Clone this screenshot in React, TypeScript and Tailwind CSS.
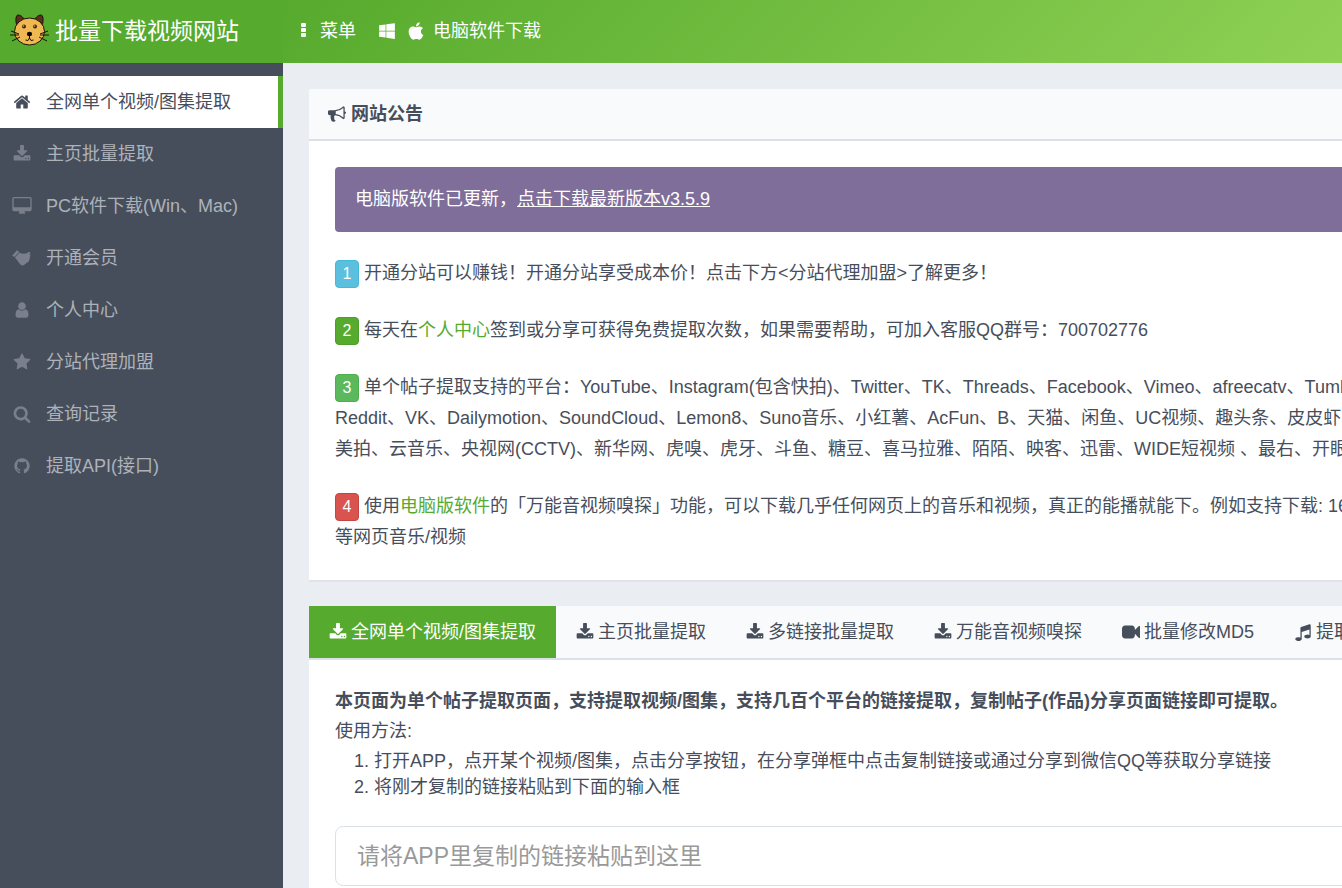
import type { ReactNode } from 'react'
import clsx from 'clsx'
import { FaApple, FaWindows } from 'react-icons/fa'

const icons = {
  home: 'M1472 992v480q0 26-19 45t-45 19h-384v-384h-256v384h-384q-26 0-45-19t-19-45v-480q0-1 .5-3t.5-3l575-474 575 474q1 2 1 6zm223-69l-62 74q-8 9-21 11h-3q-13 0-21-7l-692-577-692 577q-12 8-24 7-13-2-21-11l-62-74q-8-10-7-23.5t11-21.5l719-599q32-26 76-26t76 26l244 204v-195q0-14 9-23t23-9h192q14 0 23 9t9 23v408l219 182q10 8 11 21.5t-7 23.5z',
  download: 'M1344 1344q0-26-19-45t-45-19-45 19-19 45 19 45 45 19 45-19 19-45zm256 0q0-26-19-45t-45-19-45 19-19 45 19 45 45 19 45-19 19-45zm128-224v320q0 40-28 68t-68 28h-1472q-40 0-68-28t-28-68v-320q0-40 28-68t68-28h465l135 136q58 56 136 56t136-56l136-136h464q40 0 68 28t28 68zm-325-569q17 41-14 70l-448 448q-18 19-45 19t-45-19l-448-448q-31-29-14-70 17-39 59-39h256v-448q0-26 19-45t45-19h256q26 0 45 19t19 45v448h256q42 0 59 39z',
  desktop: 'M1728 992v-832q0-13-9.5-22.5t-22.5-9.5h-1600q-13 0-22.5 9.5t-9.5 22.5v832q0 13 9.5 22.5t22.5 9.5h1600q13 0 22.5-9.5t9.5-22.5zm128-832v1088q0 66-47 113t-113 47h-544q0 37 16 77.5t32 71 16 43.5q0 26-19 45t-45 19h-512q-26 0-45-19t-19-45q0-14 16-44t32-70 16-78h-544q-66 0-113-47t-47-113v-1088q0-66 47-113t113-47h1600q66 0 113 47t47 113z',
  hand: 'M-40 620L380 160Q430 120 480 170L600 300L150 790Q110 780 80 750L-50 700Q-70 660-40 620zM200 840L650 340Q800 470 960 480L1330 440L1560 290Q1700 270 1740 400Q1740 470 1620 560L1740 620Q1770 690 1700 740L1650 800L1690 860Q1720 960 1620 1010L1600 1200Q1560 1280 1480 1290L1280 1450Q1080 1660 940 1640Q760 1600 640 1440L440 1140Q300 980 200 840z',
  user: 'M1536 1399q0 109-62.5 187t-150.5 78h-854q-88 0-150.5-78t-62.5-187q0-85 8.5-160.5t31.5-152 58.5-131 94-89 134.5-34.5q131 128 313 128t313-128q76 0 134.5 34.5t94 89 58.5 131 31.5 152 8.5 160.5zm-256-887q0 159-112.5 271.5t-271.5 112.5-271.5-112.5-112.5-271.5 112.5-271.5 271.5-112.5 271.5 112.5 112.5 271.5z',
  star: 'M1728 647q0 22-26 48l-363 354 86 500q1 7 1 20 0 21-10.5 35.5t-30.5 14.5q-19 0-40-12l-449-236-449 236q-22 12-40 12-21 0-31.5-14.5t-10.5-35.5q0-6 2-20l86-500-364-354q-25-27-25-48 0-37 56-46l502-73 225-455q19-41 49-41t49 41l225 455 502 73q56 9 56 46z',
  search: 'M1216 832q0-185-131.5-316.5t-316.5-131.5-316.5 131.5-131.5 316.5 131.5 316.5 316.5 131.5 316.5-131.5 131.5-316.5zm512 832q0 52-38 90t-90 38q-54 0-90-38l-343-342q-179 124-399 124-143 0-273.5-55.5t-225-150-150-225-55.5-273.5 55.5-273.5 150-225 225-150 273.5-55.5 273.5 55.5 225 150 150 225 55.5 273.5q0 220-124 399l343 343q37 37 37 90z',
  github: 'M896 128q209 0 385.5 103t279.5 279.5 103 385.5q0 251-146.5 451.5t-378.5 277.5q-27 5-40-7t-13-30q0-3 .5-76.5t.5-134.5q0-97-52-142 57-6 102.5-18t94-39 81-66.5 53-105 20.5-150.5q0-119-79-206 37-91-8-204-28-9-81 11t-92 44l-38 24q-93-26-192-26t-192 26q-16-11-42.5-27t-83.5-38.5-85-13.5q-45 113-8 204-79 87-79 206 0 85 20.5 150t52.5 105 80.5 67 94 39 102.5 18q-39 36-49 103-21 10-45 15t-57 5-65.5-21.5-55.5-62.5q-19-32-48.5-52t-49.5-24l-20-3q-21 0-29 4.5t-5 11.5 9 14 13 12l7 5q22 10 43.5 38t31.5 51l10 23q13 38 44 61.5t67 30 69.5 7 55.5-3.5l23-4q0 38 .5 88.5t.5 54.5q0 18-13 30t-40 7q-232-77-378.5-277.5t-146.5-451.5q0-209 103-385.5t279.5-279.5 385.5-103z',
  bullhorn: 'M1664 640q53 0 90.5 37.5t37.5 90.5-37.5 90.5-90.5 37.5v384q0 52-38 90t-90 38q-417-347-812-380-58 19-91 66t-31 100.5 40 92.5q-20 33-23 65.5t6 58 33.5 55 48 50 61.5 50.5q-29 58-111.5 83t-168.5 11.5-132-55.5q-7-23-29.5-87.5t-32-94.5-23-89-15-101 3.5-98.5 22-110.5h-122q-66 0-113-47t-47-113v-192q0-66 47-113t113-47h480q435 0 896-384 52 0 90 38t38 90v384zm-128 604v-954q-394 302-768 343v270q377 42 768 341z',
  video: 'M1792 352v1088q0 42-39 59-13 5-25 5-27 0-45-19l-403-403v166q0 119-84.5 203.5t-203.5 84.5h-704q-119 0-203.5-84.5t-84.5-203.5v-704q0-119 84.5-203.5t203.5-84.5h704q119 0 203.5 84.5t84.5 203.5v165l403-402q18-19 45-19 12 0 25 5 39 17 39 59z',
  music: 'M1664 224v1120q0 50-34 89t-86 60.5-103.5 32-96.5 10.5-96.5-10.5-103.5-32-86-60.5-34-89 34-89 86-60.5 103.5-32 96.5-10.5q105 0 192 39v-537l-768 237v709q0 50-34 89t-86 60.5-103.5 32-96.5 10.5-96.5-10.5-103.5-32-86-60.5-34-89 34-89 86-60.5 103.5-32 96.5-10.5q105 0 192 39v-967q0-31 19-56.5t49-35.5l832-256q12-4 28-4 40 0 68 28t28 68z',
}

type IconName = keyof typeof icons

function Icon({ name, className }: { name: IconName; className?: string }) {
  return (
    <svg
      viewBox={name === 'desktop' ? '-64 0 1920 1792' : '0 0 1792 1792'}
      fill="currentColor"
      aria-hidden="true"
      className={clsx('shrink-0 overflow-visible', className ?? 'size-[18px]')}
    >
      <path d={icons[name]} />
    </svg>
  )
}

function CatLogo() {
  return (
    <svg viewBox="0 0 40 34" className="h-[34px] w-10 shrink-0" aria-hidden="true">
      <g stroke="#1c1208" strokeWidth="1">
        <path d="M7 12C5 6 6 1 8 1c3 0 6 3 7 6zM32 12c2-6 1-11-1-11-3 0-6 3-7 6z" fill="#5b2f1a" />
        <ellipse cx="19.500" cy="17.500" rx="15" ry="13.500" fill="#efb852" />
        <path d="M1 17l8 3M0 21h9M2 27l8-4M38 17l-8 3M39 21h-9M37 27l-8-4" fill="none" />
        <path d="M19.500 21v4M19.500 24q-1 4-4 2M19.500 24q1 4 4 2" fill="none" />
      </g>
      <circle cx="14" cy="12.500" r="2" fill="#3b2412" />
      <circle cx="25" cy="12.500" r="2" fill="#3b2412" />
      <circle cx="13.500" cy="12" r=".8" fill="#efb852" />
      <circle cx="24.500" cy="12" r=".8" fill="#efb852" />
      <ellipse cx="19.500" cy="20" rx="2.600" ry="2.200" fill="#0c0804" />
    </svg>
  )
}

const menu: { icon: IconName; label: string; active?: boolean }[] = [
  { icon: 'home', label: '全网单个视频/图集提取', active: true },
  { icon: 'download', label: '主页批量提取' },
  { icon: 'desktop', label: 'PC软件下载(Win、Mac)' },
  { icon: 'hand', label: '开通会员' },
  { icon: 'user', label: '个人中心' },
  { icon: 'star', label: '分站代理加盟' },
  { icon: 'search', label: '查询记录' },
  { icon: 'github', label: '提取API(接口)' },
]

const tabs: { icon: IconName; label: string }[] = [
  { icon: 'download', label: '全网单个视频/图集提取' },
  { icon: 'download', label: '主页批量提取' },
  { icon: 'download', label: '多链接批量提取' },
  { icon: 'download', label: '万能音视频嗅探' },
  { icon: 'video', label: '批量修改MD5' },
  { icon: 'music', label: '提取音频' },
]

const badgeColors = {
  info: 'bg-[#5bc0de] border-[#46b8da]',
  primary: 'bg-[#56aa2d] border-[#4e9f27]',
  success: 'bg-[#5cb85c] border-[#4cae4c]',
  danger: 'bg-[#d9534f] border-[#c14743]',
}

function Notice({ no, color, children }: { no: number; color: keyof typeof badgeColors; children: ReactNode }) {
  return (
    <p className="leading-[31px]">
      <span
        className={clsx(
          'mr-[5px] inline-flex h-7 w-6 items-center justify-center rounded border align-middle text-base leading-none text-white',
          badgeColors[color]
        )}
      >
        {no}
      </span>
      {children}
    </p>
  )
}

function Sidebar() {
  return (
    <aside className="w-[283px] shrink-0 bg-[#474e5b] pt-[13px]">
      <nav>
        {menu.map(item => (
          <a
            key={item.label}
            href="#"
            className={clsx(
              'flex h-[52px] items-center border-r-[5px] pl-[13px]',
              item.active ? 'border-[#56aa2d] bg-white text-[#474e5b]' : 'border-transparent text-[#adb2ba]'
            )}
          >
            <span className={clsx('mr-[15px] flex w-[18px] justify-center', !item.active && 'text-[#7a808b]')}>
              <Icon name={item.icon} className={item.icon === 'desktop' ? 'h-[18px] w-5' : undefined} />
            </span>
            {item.label}
          </a>
        ))}
      </nav>
    </aside>
  )
}

export default function App() {
  return (
    <div className="flex h-screen flex-col overflow-hidden bg-[#eaedf2] font-['Liberation_Sans','Noto_Sans_CJK_SC',sans-serif] text-[18px] leading-[26px] whitespace-nowrap text-[#474e5b]">
      {/* 顶部导航 */}
      <header className="flex h-[63px] shrink-0 text-white">
        <a href="#" className="flex w-[283px] shrink-0 items-center gap-[5px] bg-[#56aa2d] pb-[2px] pl-[10px] text-[23px]">
          <CatLogo />
          批量下载视频网站
        </a>
        <nav className="flex flex-1 items-center bg-linear-[135deg] from-[#56aa2d] to-[#8fd155] pb-[2px] pl-[17px]">
          <button type="button" className="flex items-center gap-[12px]">
            <svg viewBox="0 0 8 16" fill="currentColor" className="h-4 w-2" aria-hidden="true">
              <rect x="1" y="0" width="5" height="4" rx="1" />
              <rect x="1" y="5" width="5" height="4" rx="1" />
              <rect x="1" y="10" width="5" height="4" rx="1" />
            </svg>
            菜单
          </button>
          <a href="#" className="ml-[22px] flex items-center">
            <FaWindows className="size-[18px]" />
            <FaApple className="ml-[10px] size-5" />
            <span className="ml-[7px]">电脑软件下载</span>
          </a>
        </nav>
      </header>

      <div className="flex min-h-0 flex-1">
        <Sidebar />

        <main className="min-w-0 flex-1 overflow-hidden pt-[26px] pl-[26px]">
          <div className="min-w-[1200px] space-y-[26px]">
            {/* 网站公告 */}
            <section className="rounded-t-[3px] bg-white shadow-[0_2px_0_#e0e4ea]">
              <h3 className="flex h-[52px] items-center gap-[5px] rounded-t-[3px] border-b-2 border-[#dbe1e8] bg-[#f9fafc] pl-[19px] font-bold">
                <Icon name="bullhorn" />
                网站公告
              </h3>
              <div className="space-y-[26px] p-[26px] pb-[27px]">
                <div className="rounded bg-[#7f6e9a] p-5 leading-[25px] text-white">
                  电脑版软件已更新，
                  <a href="#" className="underline">点击下载最新版本v3.5.9</a>
                </div>
                <Notice no={1} color="info">
                  开通分站可以赚钱！开通分站享受成本价！点击下方&lt;分站代理加盟&gt;了解更多！
                </Notice>
                <Notice no={2} color="primary">
                  每天在<a href="#" className="text-[#56aa2d]">个人中心</a>签到或分享可获得免费提取次数，如果需要帮助，可加入客服QQ群号：700702776
                </Notice>
                <Notice no={3} color="success">
                  单个帖子提取支持的平台：YouTube、Instagram(包含快拍)、Twitter、TK、Threads、Facebook、Vimeo、afreecatv、Tumblr、
                  <br />
                  Reddit、VK、Dailymotion、SoundCloud、Lemon8、Suno音乐、小红薯、AcFun、B、天猫、闲鱼、UC视频、趣头条、皮皮虾、
                  <br />
                  美拍、云音乐、央视网(CCTV)、新华网、虎嗅、虎牙、斗鱼、糖豆、喜马拉雅、陌陌、映客、迅雷、WIDE短视频 、最右、开眼、
                </Notice>
                <Notice no={4} color="danger">
                  使用<a href="#" className="text-[#56aa2d]">电脑版软件</a>的「万能音视频嗅探」功能，可以下载几乎任何网页上的音乐和视频，真正的能播就能下。例如支持下载: 163音乐
                  <br />
                  等网页音乐/视频
                </Notice>
              </div>
            </section>

            {/* 提取面板 */}
            <section className="bg-white">
              <div role="tablist" className="flex border-b-2 border-[#dbe1e8] bg-[#f9fafc]">
                {tabs.map((tab, i) => (
                  <button
                    key={tab.label}
                    type="button"
                    role="tab"
                    aria-selected={i === 0}
                    className={clsx('flex h-[52px] items-center gap-1 px-5', i === 0 && 'bg-[#56aa2d] text-white')}
                  >
                    <Icon name={tab.icon} />
                    {tab.label}
                  </button>
                ))}
              </div>
              <div className="p-[26px]">
                <p className="leading-[30px] font-bold">
                  本页面为单个帖子提取页面，支持提取视频/图集，支持几百个平台的链接提取，复制帖子(作品)分享页面链接即可提取。
                </p>
                <p className="leading-[30px]">使用方法:</p>
                <ol className="mb-[26px] list-decimal pt-[2px] pl-[39px]">
                  <li>打开APP，点开某个视频/图集，点击分享按钮，在分享弹框中点击复制链接或通过分享到微信QQ等获取分享链接</li>
                  <li>将刚才复制的链接粘贴到下面的输入框</li>
                </ol>
                <input
                  type="text"
                  aria-label="分享链接"
                  placeholder="请将APP里复制的链接粘贴到这里"
                  className="h-[60px] w-full rounded-lg border border-[#dbe1e8] bg-white px-[21px] text-[23px] outline-none placeholder:text-[#999]"
                />
              </div>
            </section>
          </div>
        </main>
      </div>
    </div>
  )
}
